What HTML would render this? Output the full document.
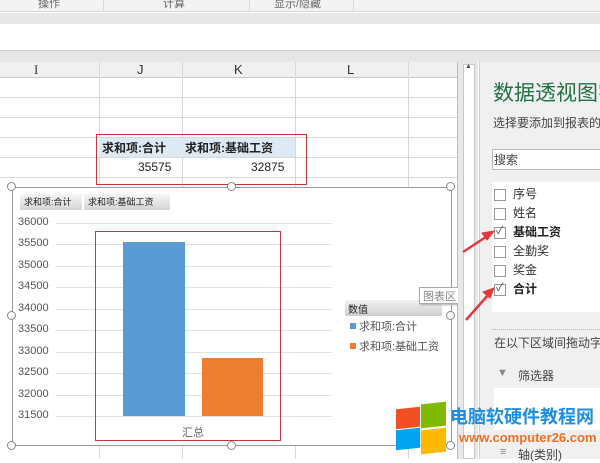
<!DOCTYPE html>
<html><head><meta charset="utf-8"><style>
*{margin:0;padding:0;box-sizing:border-box}
body{width:600px;height:459px;overflow:hidden;position:relative;background:#fff;font-family:"Liberation Sans","Noto Sans CJK SC",sans-serif;font-size:12px;color:#333}
.a{position:absolute}
.t{position:absolute;white-space:nowrap}
.hl{position:absolute;height:1px;background:#d8d8d8}
.vl{position:absolute;width:1px;background:#d8d8d8}
.h{position:absolute;width:9px;height:9px;border:1.5px solid #888;border-radius:50%;background:#fff}
.cb{position:absolute;width:12px;height:12px;border:1px solid #999;background:#fff}
.yl{position:absolute;left:18px;font-size:11px;color:#555}
.g{position:absolute;left:56px;width:276px;height:1px;background:#e2e2e2}
</style></head><body>
<!-- ribbon -->
<div class="a" style="left:0;top:0;width:600px;height:12px;background:#f3f3f3;border-bottom:1px solid #d6d6d6"></div>
<div class="t" style="left:38px;top:-5px;font-size:11px;color:#666">操作</div>
<div class="t" style="left:163px;top:-5px;font-size:11px;color:#666">计算</div>
<div class="t" style="left:274px;top:-5px;font-size:11px;color:#666">显示/隐藏</div>
<div class="vl" style="left:103px;top:0;height:12px"></div>
<div class="vl" style="left:249px;top:0;height:12px"></div>
<div class="vl" style="left:353px;top:0;height:12px"></div>
<div class="a" style="left:0;top:13px;width:600px;height:11px;background:#e8e8e8"></div>
<div class="a" style="left:0;top:50px;width:600px;height:12px;background:#e6e6e6;border-top:1px solid #cfcfcf"></div>
<!-- column header -->
<div class="a" style="left:0;top:62px;width:458px;height:16px;background:#f0f0f0;border-bottom:1px solid #c8c8c8"></div>
<div class="t" style="left:34px;top:62px;font-size:13px;font-family:'Liberation Serif',serif">I</div>
<div class="t" style="left:137px;top:62px;font-size:13px">J</div>
<div class="t" style="left:234px;top:62px;font-size:13px">K</div>
<div class="t" style="left:347px;top:62px;font-size:13px">L</div>
<div class="vl" style="left:99px;top:62px;height:397px"></div>
<div class="vl" style="left:182px;top:62px;height:397px"></div>
<div class="vl" style="left:295px;top:62px;height:397px"></div>
<div class="vl" style="left:408px;top:62px;height:397px"></div>
<div class="vl" style="left:457px;top:62px;height:397px;background:#bbb"></div>
<div class="hl" style="left:0;top:97px;width:457px"></div>
<div class="hl" style="left:0;top:117px;width:457px"></div>
<div class="hl" style="left:0;top:137px;width:457px"></div>
<div class="hl" style="left:0;top:157px;width:457px"></div>
<div class="hl" style="left:0;top:177px;width:457px"></div>
<!-- pivot table -->
<div class="a" style="left:99px;top:138px;width:196px;height:19px;background:#dde9f5"></div>
<div class="t" style="left:102px;top:139px;font-size:12px;font-weight:bold;color:#222">求和项:合计</div>
<div class="t" style="left:185px;top:139px;font-size:12px;font-weight:bold;color:#222">求和项:基础工资</div>
<div class="t" style="left:138px;top:160px;font-size:12px;color:#222">35575</div>
<div class="t" style="left:251px;top:160px;font-size:12px;color:#222">32875</div>
<div class="a" style="left:96px;top:134px;width:211px;height:51px;border:1px solid #c0393b"></div>
<!-- chart -->
<div class="a" style="left:12px;top:187px;width:440px;height:259px;background:#fff;border:1px solid #999"></div>
<div class="a" style="left:20px;top:194px;width:62px;height:16px;background:linear-gradient(#f6f6f6,#d4d4d4)"></div>
<div class="a" style="left:84px;top:194px;width:86px;height:16px;background:linear-gradient(#f6f6f6,#d4d4d4)"></div>
<div class="t" style="left:24px;top:195px;font-size:9px;color:#222">求和项:合计</div>
<div class="t" style="left:88px;top:195px;font-size:9px;color:#222">求和项:基础工资</div>
<div class="g" style="top:223px"></div><div class="yl" style="top:216px">36000</div>
<div class="g" style="top:244px"></div><div class="yl" style="top:237px">35500</div>
<div class="g" style="top:266px"></div><div class="yl" style="top:259px">35000</div>
<div class="g" style="top:287px"></div><div class="yl" style="top:280px">34500</div>
<div class="g" style="top:309px"></div><div class="yl" style="top:302px">34000</div>
<div class="g" style="top:330px"></div><div class="yl" style="top:323px">33500</div>
<div class="g" style="top:352px"></div><div class="yl" style="top:345px">33000</div>
<div class="g" style="top:373px"></div><div class="yl" style="top:366px">32500</div>
<div class="g" style="top:395px"></div><div class="yl" style="top:388px">32000</div>
<div class="g" style="top:416px"></div><div class="yl" style="top:409px">31500</div>
<div class="a" style="left:123px;top:242px;width:62px;height:174px;background:#5b9bd5"></div>
<div class="a" style="left:202px;top:358px;width:61px;height:58px;background:#ed7d31"></div>
<div class="t" style="left:182px;top:424px;font-size:11px;color:#666">汇总</div>
<div class="a" style="left:95px;top:231px;width:186px;height:210px;border:1px solid #c0393b"></div>
<div class="a" style="left:345px;top:300px;width:97px;height:16px;background:linear-gradient(#f2f2f2,#d0d0d0)"></div>
<div class="t" style="left:348px;top:301px;font-size:10px;color:#222">数值</div>
<div class="a" style="left:350px;top:323px;width:6px;height:6px;background:#5b9bd5"></div>
<div class="t" style="left:359px;top:318px;font-size:11px;color:#555">求和项:合计</div>
<div class="a" style="left:350px;top:343px;width:6px;height:6px;background:#ed7d31"></div>
<div class="t" style="left:359px;top:338px;font-size:11px;color:#555">求和项:基础工资</div>
<div class="a" style="left:419px;top:287px;width:49px;height:17px;background:#fff;border:1px solid #aaa;box-shadow:1px 1px 2px #aaa"></div>
<div class="t" style="left:423px;top:288px;font-size:11px;color:#888">图表区</div>
<div class="h" style="left:7px;top:182px"></div><div class="h" style="left:227px;top:182px"></div><div class="h" style="left:446px;top:182px"></div>
<div class="h" style="left:7px;top:311px"></div><div class="h" style="left:446px;top:311px"></div>
<div class="h" style="left:7px;top:441px"></div><div class="h" style="left:227px;top:441px"></div><div class="h" style="left:446px;top:441px"></div>
<!-- scrollbar -->
<div class="a" style="left:458px;top:62px;width:20px;height:397px;background:#e8e8e8"></div>
<div class="a" style="left:463px;top:64px;width:12px;height:395px;background:#fff;border:1px solid #c8c8c8"></div>
<div class="t" style="left:465px;top:63px;font-size:7px;color:#555">▲</div>
<!-- right panel -->
<div class="a" style="left:479px;top:62px;width:121px;height:397px;background:#f0f0f0;border-left:1px solid #d0d0d0"></div>
<div class="t" style="left:493px;top:77px;font-size:21px;color:#217346">数据透视图字</div>
<div class="t" style="left:493px;top:114px;font-size:12px;color:#444">选择要添加到报表的</div>
<div class="a" style="left:492px;top:149px;width:110px;height:21px;background:#fff;border:1px solid #bbb"></div>
<div class="t" style="left:494px;top:151px;font-size:12px;color:#444">搜索</div>
<div class="a" style="left:492px;top:182px;width:108px;height:130px;background:#fff"></div>
<div class="cb" style="left:494px;top:189px"></div><div class="t" style="left:513px;top:185px;font-size:12px">序号</div>
<div class="cb" style="left:494px;top:208px"></div><div class="t" style="left:513px;top:204px;font-size:12px">姓名</div>
<div class="cb" style="left:494px;top:227px"></div><div class="t" style="left:496px;top:222px;font-size:11px;color:#555">✓</div><div class="t" style="left:513px;top:223px;font-size:12px;font-weight:bold;color:#222">基础工资</div>
<div class="cb" style="left:494px;top:246px"></div><div class="t" style="left:513px;top:242px;font-size:12px">全勤奖</div>
<div class="cb" style="left:494px;top:265px"></div><div class="t" style="left:513px;top:261px;font-size:12px">奖金</div>
<div class="cb" style="left:494px;top:284px"></div><div class="t" style="left:496px;top:279px;font-size:11px;color:#555">✓</div><div class="t" style="left:513px;top:280px;font-size:12px;font-weight:bold;color:#222">合计</div>
<div class="a" style="left:492px;top:329px;width:108px;border-top:1px dotted #bbb"></div>
<div class="t" style="left:494px;top:334px;font-size:12px;color:#444">在以下区域间拖动字</div>
<div class="t" style="left:497px;top:367px;font-size:11px;color:#888">▼</div>
<div class="t" style="left:518px;top:367px;font-size:12px;color:#444">筛选器</div>
<div class="a" style="left:494px;top:388px;width:106px;height:42px;background:#fff"></div>
<div class="t" style="left:500px;top:446px;font-size:11px;color:#888">≡</div>
<div class="t" style="left:518px;top:446px;font-size:12px;color:#444">轴(类别)</div>
<!-- watermark -->
<div class="a" style="left:396px;top:408px;width:24px;height:20px;background:#f25022;transform:skewY(-6deg)"></div>
<div class="a" style="left:421px;top:403px;width:25px;height:24px;background:#7fba00;transform:skewY(-6deg)"></div>
<div class="a" style="left:396px;top:429px;width:24px;height:20px;background:#00a4ef;transform:skewY(-6deg)"></div>
<div class="a" style="left:421px;top:429px;width:25px;height:24px;background:#ffb900;transform:skewY(-6deg)"></div>
<div class="t" style="left:450px;top:403px;font-size:18px;font-weight:bold;color:#1e8fe0">电脑软硬件教程网</div>
<div class="t" style="left:459px;top:430px;font-size:13px;font-weight:bold;color:#f07028">www.computer26.com</div>
<!-- arrows -->
<svg class="a" style="left:0;top:0" width="600" height="459">
<g stroke="#e0393e" stroke-width="2.5" fill="#e0393e">
<line x1="463" y1="252" x2="489" y2="235"/><polygon points="494,231 482,233 487,240" stroke-width="1"/>
<line x1="466" y1="320" x2="489" y2="294"/><polygon points="494,288 483,292 490,298" stroke-width="1"/>
</g></svg>
</body></html>
